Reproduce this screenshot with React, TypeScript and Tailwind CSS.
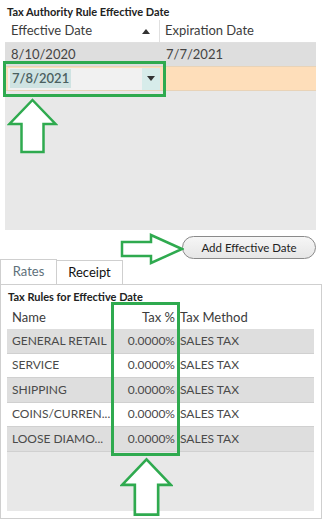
import React from "react";

// Rows for the tax rules grid
const taxRules = [
  { name: "GENERAL RETAIL", rate: "0.0000%", method: "SALES TAX" },
  { name: "SERVICE", rate: "0.0000%", method: "SALES TAX" },
  { name: "SHIPPING", rate: "0.0000%", method: "SALES TAX" },
  { name: "COINS/CURREN...", rate: "0.0000%", method: "SALES TAX" },
  { name: "LOOSE DIAMO...", rate: "0.0000%", method: "SALES TAX" },
];

// Outline arrow pointing up (green stroke, white fill)
const UpArrow = ({ className }: { className: string }) => (
  <svg className={className} viewBox="0 0 50 56" fill="none">
    <path
      d="M25 2 L48 26 L36 26 L36 54 L14 54 L14 26 L2 26 Z"
      fill="#ffffff"
      stroke="#2faa4f"
      strokeWidth="2.5"
      strokeLinejoin="miter"
    />
  </svg>
);

const RightArrow = ({ className }: { className: string }) => (
  <svg className={className} viewBox="0 0 64 32" fill="none">
    <path
      d="M62 16 L31 2 L31 9 L2 9 L2 23 L31 23 L31 30 Z"
      fill="#ffffff"
      stroke="#2faa4f"
      strokeWidth="2.5"
    />
  </svg>
);

const App: React.FC = () => {
  return (
    <div
      className="relative w-[323px] h-[522px] bg-white overflow-hidden text-[13px] text-[#3c3c3c]"
      style={{ fontFamily: "'Segoe UI', Lato, 'Noto Sans', sans-serif" }}
    >
      {/* Effective date section */}
      <div className="pt-[5px] pl-[7px] h-[20px] text-[11px] font-bold text-[#222] leading-[14px]">
        Tax Authority Rule Effective Date
      </div>
      <div className="ml-[5px] w-[311px] h-[210px] bg-[#e8e8e8] flex flex-col">
        {/* header */}
        <div className="flex h-[23px] bg-white items-center border-b border-[#e0e0e0]">
          <div className="w-[155px] pl-[6px] flex items-center justify-between pr-[9px] border-r border-[#e0e0e0] h-full">
            <span>Effective Date</span>
            <svg width="8" height="5" viewBox="0 0 8 5">
              <path d="M0 5 L8 5 L4 0 Z" fill="#333" />
            </svg>
          </div>
          <div className="pl-[5px]">Expiration Date</div>
        </div>
        {/* row 1 */}
        <div className="flex h-[23px] bg-[#dedede] items-center text-[#444]">
          <div className="w-[155px] pl-[6px]">8/10/2020</div>
          <div className="pl-[6px]">7/7/2021</div>
        </div>
        {/* row 2 - editing */}
        <div className="flex h-[25px] bg-[#fedeba] items-center border-t border-b border-[#e8d3b8]">
          <div className="ml-[3px] w-[152px] h-[22px] bg-[#f1f1f1] flex items-center justify-between">
            <span className="ml-[2px] px-[2px] bg-[#cfe3e2] font-semibold text-[#4a6060]">7/8/2021</span>
            <span className="w-[18px] h-full bg-[#d7ecea] flex items-center justify-center">
              <svg width="8" height="5" viewBox="0 0 8 5">
                <path d="M0 0 L8 0 L4 5 Z" fill="#333" />
              </svg>
            </span>
          </div>
        </div>
      </div>

      {/* button row */}
      <div className="flex justify-end pr-[7px] mt-[6px] h-[23px]">
        <button className="w-[134px] h-[23px] rounded-full border border-[#8a8a8a] bg-gradient-to-b from-[#f6f6f6] to-[#e6e6e6] text-[11.5px] text-[#222]">
          Add Effective Date
        </button>
      </div>

      {/* tabs */}
      <div className="flex items-end h-[25px]">
        <div className="w-[57px] h-[25px] border border-b-0 border-[#cfcfcf] bg-white flex items-center justify-center text-[13px] text-[#5e707a]">
          Rates
        </div>
        <div className="w-[66px] h-[24px] border border-l-0 border-b-0 border-[#cfcfcf] bg-white flex items-center justify-center text-[13px] text-[#111]">
          Receipt
        </div>
      </div>

      {/* tab panel */}
      <div className="w-[322px] h-[235px] border border-[#cfcfcf] bg-white px-[6px]">
        <div className="h-[21px] pt-[5px] pl-[1px] text-[11px] font-bold text-[#222] leading-[14px]">
          Tax Rules for Effective Date
        </div>
        <div className="w-[307px] h-[205px] bg-[#e8e8e8] flex flex-col text-[12px]">
          <div className="flex h-[23px] bg-white items-center text-[13px]">
            <div className="w-[106px] pl-[5px]">Name</div>
            <div className="w-[64px] text-right pr-[2px]">Tax %</div>
            <div className="pl-[3px]">Tax Method</div>
          </div>
          {taxRules.map((r, i) => (
            <div
              key={r.name}
              className={`flex h-[24.5px] items-center text-[#4a4a4a] border-b border-[#d0d0d0] ${
                i % 2 === 0 ? "bg-[#dedede]" : "bg-white"
              }`}
            >
              <div className="w-[106px] pl-[5px] whitespace-nowrap">{r.name}</div>
              <div className="w-[64px] text-right pr-[2px]">{r.rate}</div>
              <div className="pl-[3px]">{r.method}</div>
            </div>
          ))}
        </div>
      </div>

      {/* annotation overlays */}
      <div className="absolute left-[3px] top-[61px] w-[163px] h-[36px] border-[3px] border-[#2faa4f]" />
      <UpArrow className="absolute left-[7px] top-[98px] w-[51px] h-[56px]" />
      <RightArrow className="absolute left-[120px] top-[233px] w-[64px] h-[32px]" />
      <div className="absolute left-[111px] top-[302px] w-[69px] h-[154px] border-[3px] border-[#2faa4f]" />
      <UpArrow className="absolute left-[120px] top-[452px] w-[53px] h-[70px]" />
    </div>
  );
};

export default App;
